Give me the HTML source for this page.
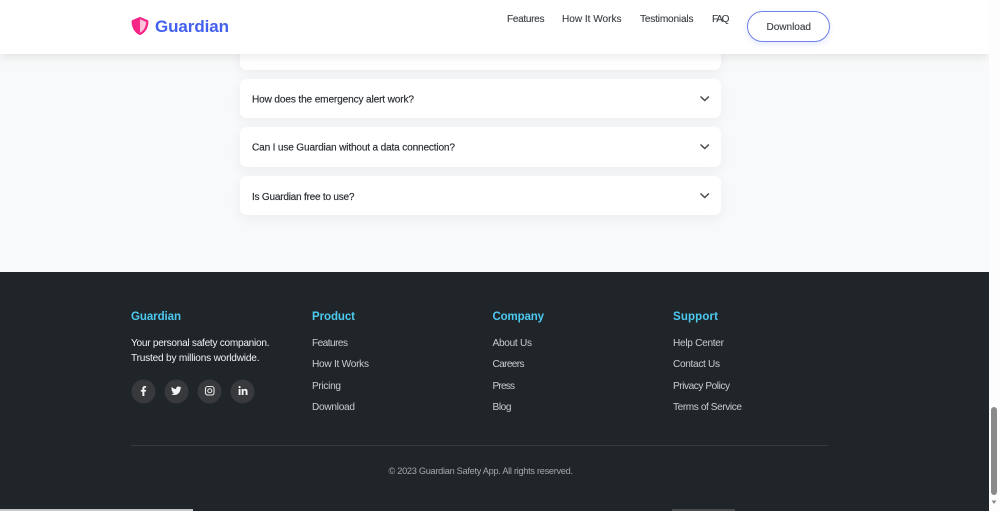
<!DOCTYPE html>
<html lang="en"><head><meta charset="utf-8"><title>Guardian</title>
<style>
html,body{margin:0;padding:0;width:1000px;height:511px;overflow:hidden;background:#f8f9fa}
body{position:relative;font-family:"Liberation Sans",sans-serif}
.a{position:absolute;box-sizing:border-box}
.card{left:240px;width:481px;background:#fff;border-radius:7px;box-shadow:0 4px 12px rgba(0,0,0,.05)}
svg text{font-family:"Liberation Sans",sans-serif}
.q{font-size:10.1px;fill:#2b3035;stroke:#2b3035;stroke-width:.18px}
.n{font-size:10.1px;fill:#3a3f44;stroke:#3a3f44;stroke-width:.12px}
.h{font-size:11.5px;font-weight:700;fill:#4cc9f0}
.l{font-size:10.1px;fill:#c9ccd0}
.w{font-size:10.1px;fill:#f1f2f3}
</style></head>
<body>
<div class="a card" style="top:20px;height:50px"></div>
<div class="a card" style="top:79px;height:39px"></div>
<div class="a card" style="top:127px;height:40px"></div>
<div class="a card" style="top:176px;height:39px"></div>
<div class="a" style="left:0;top:272px;width:989px;height:239px;background:#202529"></div>
<div class="a" style="left:0;top:0;width:989px;height:54px;background:#fff;box-shadow:0 2px 10px rgba(0,0,0,.1)"></div>
<div class="a" style="left:747px;top:11px;width:83px;height:31px;background:#fff;border:1px solid #6f83ea;border-radius:16px;box-shadow:0 2px 6px rgba(67,97,238,.15)"></div>
<div class="a" style="left:131px;top:445px;width:697px;height:1px;background:rgba(255,255,255,.1)"></div>
<div class="a" style="left:989px;top:0;width:11px;height:511px;background:#fdfdfd"></div>
<div class="a" style="left:991px;top:407px;width:6px;height:88px;background:#8a8a8a;border-radius:3px"></div>
<div class="a" style="left:0;top:509px;width:193px;height:2px;background:#c4c6c7"></div>
<div class="a" style="left:672px;top:509px;width:63px;height:2px;background:#4a4c4e"></div>
<svg class="a" style="left:0;top:0;filter:blur(.2px)" width="1000" height="511" viewBox="0 0 1000 511" xmlns="http://www.w3.org/2000/svg">
<!-- logo -->
<svg x="131" y="17" width="18" height="18" viewBox="0 0 512 512"><path fill="#f72585" d="M466.5 83.7l-192-80a48.15 48.15 0 0 0-36.9 0l-192 80C27.7 91.1 16 108.6 16 128c0 198.5 114.5 335.7 221.5 380.3 11.8 4.9 25.1 4.9 36.9 0C360.1 472.6 496 349.3 496 128c0-19.4-11.7-36.9-29.5-44.3z"/><path fill="#fbc2dc" d="M256.1 446.3l-.1-381 175.9 73.3c-3.3 151.4-82.1 261.1-175.8 307.7z"/></svg>
<text x="155" y="32" font-size="17" font-weight="700" fill="#4361ee" textLength="74">Guardian</text>
<!-- nav -->
<text class="n" x="507" y="22" textLength="37.5">Features</text>
<text class="n" x="562" y="22" textLength="59.5">How It Works</text>
<text class="n" x="640" y="22" textLength="53.5">Testimonials</text>
<text class="n" x="712" y="22" textLength="17.5">FAQ</text>
<text class="n" x="766.5" y="30" textLength="44.5">Download</text>
<!-- faq -->
<text class="q" x="252" y="102.5" textLength="162">How does the emergency alert work?</text>
<text class="q" x="252" y="150.5" textLength="203">Can I use Guardian without a data connection?</text>
<text class="q" x="252" y="200" textLength="102.5">Is Guardian free to use?</text>
<g fill="none" stroke="#454a4f" stroke-width="1.5">
<path d="M700.5 96.5l4.2 4 4.2-4"/>
<path d="M700.5 144.5l4.2 4 4.2-4"/>
<path d="M700.5 193.5l4.2 4 4.2-4"/>
</g>
<!-- footer -->
<text class="h" x="131" y="320" textLength="50">Guardian</text>
<text class="h" x="312" y="320" textLength="43">Product</text>
<text class="h" x="492.5" y="320" textLength="51.5">Company</text>
<text class="h" x="673" y="320" textLength="45">Support</text>
<text class="w" x="131" y="346" textLength="138.5">Your personal safety companion.</text>
<text class="w" x="131" y="361" textLength="128.5">Trusted by millions worldwide.</text>
<text class="l" x="312" y="346" textLength="36">Features</text>
<text class="l" x="312" y="367" textLength="57">How It Works</text>
<text class="l" x="312" y="389" textLength="29">Pricing</text>
<text class="l" x="312" y="410" textLength="43">Download</text>
<text class="l" x="492.5" y="346" textLength="39.5">About Us</text>
<text class="l" x="492.5" y="367" textLength="32">Careers</text>
<text class="l" x="492.5" y="389" textLength="22.5">Press</text>
<text class="l" x="492.5" y="410" textLength="19">Blog</text>
<text class="l" x="673" y="346" textLength="51">Help Center</text>
<text class="l" x="673" y="367" textLength="47">Contact Us</text>
<text class="l" x="673" y="389" textLength="57">Privacy Policy</text>
<text class="l" x="673" y="410" textLength="69">Terms of Service</text>
<text x="388.5" y="474" font-size="9.2" fill="#a3a7ab" textLength="184.5">© 2023 Guardian Safety App. All rights reserved.</text>
<!-- social -->
<g fill="#37393d">
<circle cx="143.5" cy="391.5" r="12"/><circle cx="176.5" cy="391.5" r="12"/><circle cx="209.5" cy="391.5" r="12"/><circle cx="242.5" cy="391.5" r="12"/>
</g>
<svg x="140" y="386" width="7" height="10" viewBox="0 0 320 512"><path fill="#f4f4f4" d="M279.14 288l14.22-92.66h-88.91v-60.13c0-25.35 12.42-50.06 52.24-50.06h40.42V6.26S260.43 0 225.36 0c-73.22 0-121.08 44.38-121.08 124.72v70.62H22.89V288h81.39v224h100.17V288z"/></svg>
<svg x="171" y="385.5" width="10.5" height="10.5" viewBox="0 0 512 512"><path fill="#f4f4f4" d="M459.37 151.716c.325 4.548.325 9.097.325 13.645 0 138.72-105.583 298.558-298.558 298.558-59.452 0-114.68-17.219-161.137-47.106 8.447.974 16.568 1.299 25.34 1.299 49.055 0 94.213-16.568 130.274-44.832-46.132-.975-84.792-31.188-98.112-72.772 6.498.974 12.995 1.624 19.818 1.624 9.421 0 18.843-1.3 27.614-3.573-48.081-9.747-84.143-51.98-84.143-102.985v-1.299c13.969 7.797 30.214 12.67 47.431 13.319-28.264-18.843-46.781-51.005-46.781-87.391 0-19.492 5.197-37.36 14.294-52.954 51.655 63.675 129.3 105.258 216.365 109.807-1.624-7.797-2.599-15.918-2.599-24.04 0-57.828 46.782-104.934 104.934-104.934 30.213 0 57.502 12.67 76.67 33.137 23.715-4.548 46.456-13.32 66.599-25.34-7.798 24.366-24.366 44.833-46.132 57.827 21.117-2.273 41.584-8.122 60.426-16.243-14.292 20.791-32.161 39.308-52.628 54.253z"/></svg>
<g fill="none" stroke="#e6e6e6" stroke-width="1.1">
<rect x="205.5" y="386.5" width="8.5" height="8.5" rx="2.2"/>
<circle cx="209.75" cy="390.75" r="2"/>
</g>
<svg x="238.5" y="386" width="9" height="9" viewBox="0 0 448 448"><path fill="#f4f4f4" d="M100.28 448H7.4V148.9h92.88zM53.79 108.1C24.09 108.1 0 83.5 0 53.8a53.79 53.79 0 0 1 107.58 0c0 29.7-24.1 54.3-53.79 54.3zM447.9 448h-92.68V302.4c0-34.7-.7-79.2-48.29-79.2-48.29 0-55.69 37.7-55.69 76.7V448h-92.78V148.9h89.08v40.8h1.3c12.4-23.5 42.69-48.3 87.88-48.3 94 0 111.28 61.9 111.28 142.3V448z"/></svg>
<path d="M991.5 500.5h5l-2.5 3.5z" fill="#8a8a8a"/>
</svg>
</body></html>
